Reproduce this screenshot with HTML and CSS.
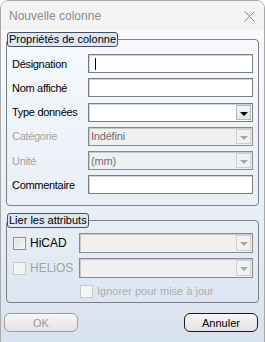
FILE: index.html
```html
<!DOCTYPE html>
<html lang="fr">
  <head>
    <meta charset="UTF-8" />
    <meta name="viewport" content="width=device-width, initial-scale=1.0" />
    <title>Nouvelle colonne</title>
    <link rel="stylesheet" href="styles.css">
  </head>

  <body>
    <div class="fenetre">
      <header class="titre">
        <span>Nouvelle colonne</span>
        <svg class="fermer" width="11" height="11" viewBox="0 0 11 11">
          <path d="M0.5 0.5 L10.5 10.5 M10.5 0.5 L0.5 10.5" stroke="#8a8a8a" stroke-width="1" fill="none" />
        </svg>
      </header>

      <main class="contenu">
        <fieldset class="groupe">
          <legend>Propriétés de colonne</legend>
          <div class="formulaire">
            <label>Désignation</label>
            <div class="champ"><span class="curseur"></span></div>

            <label>Nom affiché</label>
            <div class="champ"></div>

            <label>Type données</label>
            <div class="champ combo"><span class="fleche"></span></div>

            <label class="inactif">Catégorie</label>
            <div class="champ combo inactif"><span class="valeur">Indéfini</span><span class="fleche"></span></div>

            <label class="inactif">Unité</label>
            <div class="champ combo inactif"><span class="valeur">(mm)</span><span class="fleche"></span></div>

            <label>Commentaire</label>
            <div class="champ"></div>
          </div>
        </fieldset>

        <fieldset class="groupe liens">
          <legend>Lier les attributs</legend>
          <div class="attributs">
            <label class="case"><span class="boite"></span>HiCAD</label>
            <div class="champ combo inactif"><span class="fleche"></span></div>

            <label class="case inactif"><span class="boite"></span>HELiOS</label>
            <div class="champ combo inactif"><span class="fleche"></span></div>

            <span></span>
            <label class="case inactif ignorer"><span class="boite"></span>Ignorer pour mise à jour</label>
          </div>
        </fieldset>

        <div class="boutons">
          <button class="ok" disabled>OK</button>
          <button class="annuler">Annuler</button>
        </div>
      </main>
    </div>
  </body>
</html>
```

FILE: styles.css
```css
body {
  margin: 0;
  background-color: #ffffff;
  font-family: "Liberation Sans", Arial, sans-serif;
  font-size: 11px;
}
.fenetre {
  width: 263px;
  height: 341px;
  border: 1px solid #a9a9a9;
  border-radius: 8px 8px 0 0;
  overflow: hidden;
  display: flex;
  flex-direction: column;
}
.titre {
  height: 29px;
  flex: none;
  display: flex;
  align-items: center;
  justify-content: space-between;
  padding: 0 9px 0 8px;
  background-color: #f3f3f3;
  color: #8c8c8c;
  font-size: 12px;
}
.fermer {
  margin-top: 1px;
}
.contenu {
  flex: 1;
  padding: 2px 5px 0 5px;
  background: linear-gradient(#f8fafd, #e8eef6 60%, #d7e2ef);
}
.groupe {
  margin: 0;
  padding: 0;
  border: 1px solid #7c7f84;
  border-radius: 4px;
}
legend {
  margin-left: 0;
  padding: 0 1px;
  height: 13px;
  line-height: 13px;
  border: 1px solid #47505c;
  border-radius: 3px;
  background-color: #dde6f3;
  color: #000;
  font-size: 11px;
}
.formulaire {
  display: grid;
  grid-template-columns: 76px 1fr;
  grid-auto-rows: 19px;
  row-gap: 5.3px;
  align-items: center;
  padding: 7px 5px 11px 5px;
}
.formulaire label {
  letter-spacing: -0.3px;
}
.inactif {
  color: #a3a3a3;
}
.champ {
  position: relative;
  height: 100%;
  box-sizing: border-box;
  border: 1px solid #7d7d7d;
  box-shadow: inset 1px 1px 0 #d2d2d2;
  background-color: #fff;
  display: flex;
  align-items: center;
}
.champ.inactif {
  background-color: #f0f0f0;
  border-color: #8a8a8a;
  box-shadow: inset 1px 1px 0 #c9c9c9;
}
.valeur {
  padding-left: 2px;
  color: #6e6e6e;
  letter-spacing: -0.2px;
}
.curseur {
  width: 1px;
  height: 12px;
  margin-left: 6px;
  background-color: #000;
}
.fleche {
  position: absolute;
  right: 1px;
  top: 1px;
  bottom: 1px;
  width: 15px;
  box-sizing: border-box;
  border: 1px solid #b3b3b3;
  background: linear-gradient(#f6f6f6, #e4e4e4);
}
.fleche::after {
  content: "";
  position: absolute;
  left: 3px;
  top: 6px;
  border-left: 4px solid transparent;
  border-right: 4px solid transparent;
  border-top: 4px solid #000;
}
.inactif .fleche {
  border-color: #cfcfcf;
  background: #f1f1f1;
}
.inactif .fleche::after {
  border-top-color: #a5a5a5;
}
.liens {
  margin-top: 7px;
}
.attributs {
  display: grid;
  grid-template-columns: 66px 1fr;
  grid-template-rows: 20px 20px 13px;
  row-gap: 5px;
  align-items: center;
  padding: 5px 5px 6px 6px;
}
.attributs .case:nth-of-type(3) {
  margin-top: 3px;
}
.ignorer {
  margin-top: 6px;
  margin-left: 1px;
}
.case {
  display: flex;
  align-items: center;
  gap: 4px;
  font-size: 12px;
}
.ignorer {
  font-size: 11px;
  color: #adadad;
}
.boite {
  width: 13px;
  height: 13px;
  box-sizing: border-box;
  border: 1px solid #8e8e8e;
  background: linear-gradient(135deg, #dcdcdc, #f7f7f7);
  box-shadow: inset 0 0 0 1px #f5f5f5;
}
.case.inactif .boite {
  border-color: #c8c8c8;
  background: #f4f4f4;
}
.boutons {
  display: flex;
  justify-content: space-between;
  padding: 10px 1px 0 0;
  margin-left: -2px;
}
button {
  width: 74px;
  height: 19px;
  padding: 0;
  border-radius: 6px;
  font-family: "Liberation Sans", Arial, sans-serif;
  font-size: 11px;
  background: linear-gradient(#f7f7f7, #e3e3e3);
}
.ok {
  border: 1px solid #9e9e9e;
  color: #9a9a9a;
}
.annuler {
  border: 1px solid #1b1b1b;
  color: #000;
}
```
